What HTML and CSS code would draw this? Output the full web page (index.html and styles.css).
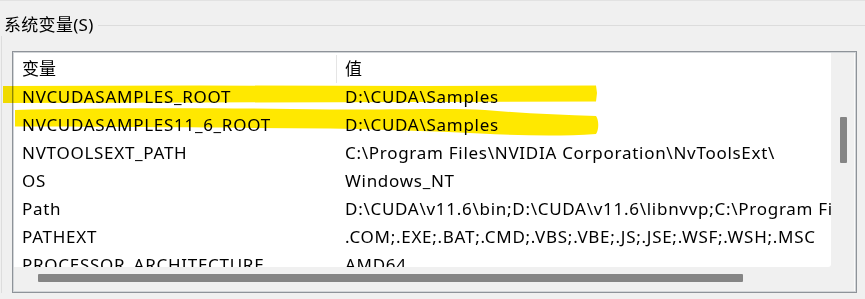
FILE: index.html
```html
<!DOCTYPE html>
<html lang="zh-CN">
<head>
<meta charset="utf-8">
<title>系统变量</title>
<link rel="stylesheet" href="styles.css">
</head>
<body>
<div class="window">
  <div class="group-head">
    <span class="group-title">系统变量(S)</span>
    <div class="group-rule"></div>
  </div>
  <div class="group-body">
    <div class="listbox">
      <div class="view">
        <div class="row head">
          <div class="cell name">变量</div>
          <div class="cell value">值</div>
        </div>
        <div class="row">
          <div class="cell name">NVCUDASAMPLES_ROOT</div>
          <div class="cell value">D:\CUDA\Samples</div>
        </div>
        <div class="row">
          <div class="cell name">NVCUDASAMPLES11_6_ROOT</div>
          <div class="cell value">D:\CUDA\Samples</div>
        </div>
        <div class="row">
          <div class="cell name">NVTOOLSEXT_PATH</div>
          <div class="cell value">C:\Program Files\NVIDIA Corporation\NvToolsExt\</div>
        </div>
        <div class="row">
          <div class="cell name">OS</div>
          <div class="cell value">Windows_NT</div>
        </div>
        <div class="row">
          <div class="cell name">Path</div>
          <div class="cell value">D:\CUDA\v11.6\bin;D:\CUDA\v11.6\libnvvp;C:\Program Files\NVIDIA GPU Computing Toolkit</div>
        </div>
        <div class="row">
          <div class="cell name">PATHEXT</div>
          <div class="cell value">.COM;.EXE;.BAT;.CMD;.VBS;.VBE;.JS;.JSE;.WSF;.WSH;.MSC</div>
        </div>
        <div class="row">
          <div class="cell name">PROCESSOR_ARCHITECTURE</div>
          <div class="cell value">AMD64</div>
        </div>
      </div>
      <div class="vscroll"><div class="vthumb"></div></div>
      <div class="hscroll"><div class="hthumb"></div></div>
    </div>
  </div>
  <svg class="marker" width="865" height="299" viewBox="0 0 865 299" aria-hidden="true">
    <path d="M3 86 L200 85.5 L420 86 L596 85.5 L597 93 L596 101.5 L420 102 L200 102.5 L3 103 Z" fill="#ffe800"/>
    <path d="M15 110 C90 108 200 107.5 330 109.5 C400 110 450 108 485 110 C520 113 560 115 596 116 C599 120 599 130 596 134 C560 136.5 520 135.5 480 133.5 C430 131 380 129.5 330 128.5 C220 127.5 100 127 15 126.5 Z" fill="#ffe800"/>
  </svg>
</div>
</body>
</html>
```

FILE: styles.css
```css
* {
  box-sizing: border-box;
}

html, body {
  margin: 0;
  padding: 0;
}

body {
  background: #f0f0f0;
  font-family: "Noto Sans", "Noto Sans CJK SC", sans-serif;
  font-size: 17px;
  color: #000;
  width: 865px;
  height: 299px;
  overflow: hidden;
}

.window {
  position: relative;
  height: 299px;
  border-top: 1px solid #e2e2e2;
}

.group-head {
  display: flex;
  align-items: center;
  height: 22px;
  margin-top: 13px;
  padding-left: 4px;
}

.group-title {
  line-height: 22px;
  white-space: nowrap;
  letter-spacing: 0.3px;
}

.group-rule {
  flex: 1;
  height: 1px;
  margin-left: 4px;
  background: #dcdcdc;
}

.group-body {
  margin-left: 1px;
  border-left: 1px solid #dddddd;
  padding: 15px 8px 0 10px;
}

.listbox {
  height: 242px;
  border: 1px solid #8e9399;
  box-shadow: inset 0 0 0 1px #d2d5d8;
  padding: 1px;
  display: grid;
  grid-template-columns: 1fr 24px;
  grid-template-rows: 1fr 24px;
}

.view {
  grid-column: 1;
  grid-row: 1;
  background: #fff;
  overflow: hidden;
  padding-top: 2px;
  border-bottom-right-radius: 3px;
}

.row {
  display: grid;
  grid-template-columns: 323px 1fr;
  height: 28px;
  line-height: 28px;
  white-space: nowrap;
}

.cell {
  overflow: hidden;
  letter-spacing: 0.72px;
}

.cell.name {
  padding-left: 8px;
}

.cell.value {
  padding-left: 8px;
  overflow: visible;
}

.row.head .cell.name {
  border-right: 1px solid #e5e5e5;
  letter-spacing: 0;
}

.row.head .cell.value {
  letter-spacing: 0;
}

.vscroll {
  grid-column: 2;
  grid-row: 1 / span 2;
  background: #f0f0f0;
  border-right: 1px solid #fbfbfb;
  padding: 64px 0 0 9px;
}

.vthumb {
  width: 7px;
  height: 46px;
  background: #858585;
  border-radius: 1px;
}

.hscroll {
  grid-column: 1;
  grid-row: 2;
  background: #f0f0f0;
  padding: 7px 0 0 24px;
}

.hthumb {
  width: 705px;
  height: 8px;
  background: #858585;
  border-radius: 1px;
}

.marker {
  position: absolute;
  left: 0;
  top: -1px;
  pointer-events: none;
  mix-blend-mode: multiply;
}
```
